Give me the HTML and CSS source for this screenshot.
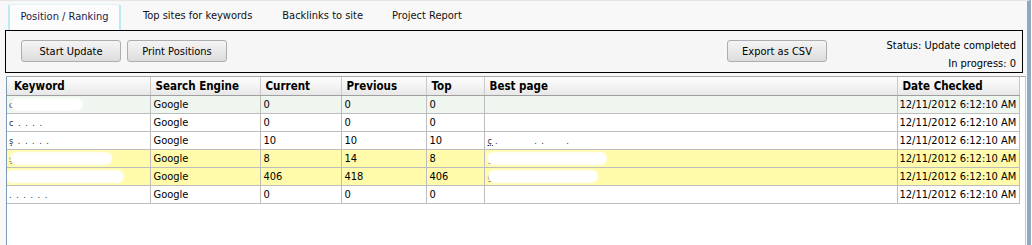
FILE: index.html
```html
<!DOCTYPE html>
<html lang="en">
<head>
  <meta charset="UTF-8" />
  <title>Position / Ranking</title>
  <link rel="stylesheet" href="styles.css">
</head>
<body>
  <div class="frame">
    <div class="tabs">
      <div class="tab active">Position / Ranking</div>
      <div class="tab">Top sites for keywords</div>
      <div class="tab">Backlinks to site</div>
      <div class="tab">Project Report</div>
    </div>

    <div class="toolbar">
      <button class="btn btn-start">Start Update</button>
      <button class="btn btn-print">Print Positions</button>
      <button class="btn btn-export">Export as CSV</button>
      <div class="status">
        <div>Status: Update completed</div>
        <div>In progress: 0</div>
      </div>
    </div>

    <div class="grid-wrap">
      <table class="grid">
        <colgroup>
          <col class="c-kw"><col class="c-se"><col class="c-cur"><col class="c-prev"><col class="c-top"><col class="c-best"><col class="c-date">
        </colgroup>
        <thead>
          <tr>
            <th>Keyword</th>
            <th>Search Engine</th>
            <th>Current</th>
            <th>Previous</th>
            <th>Top</th>
            <th>Best page</th>
            <th>Date Checked</th>
          </tr>
        </thead>
        <tbody>
          <tr class="row-sel">
            <td><span class="hid">c</span><span class="blot" style="left:5px;width:70px"></span></td>
            <td>Google</td><td>0</td><td>0</td><td>0</td><td></td>
            <td>12/11/2012 6:12:10 AM</td>
          </tr>
          <tr>
            <td><span class="hid">c . . . .</span></td>
            <td>Google</td><td>0</td><td>0</td><td>0</td><td></td>
            <td>12/11/2012 6:12:10 AM</td>
          </tr>
          <tr>
            <td><span class="hid">ş . . . . .</span></td>
            <td>Google</td><td>10</td><td>10</td><td>10</td>
            <td><span class="hid link">ç</span><span class="hid dots">.&nbsp;&nbsp;&nbsp;&nbsp;&nbsp;&nbsp;&nbsp;&nbsp;&nbsp;&nbsp;.&nbsp;.&nbsp;&nbsp;&nbsp;&nbsp;&nbsp;&nbsp;.</span></td>
            <td>12/11/2012 6:12:10 AM</td>
          </tr>
          <tr class="row-hl">
            <td><span class="hid">ş . . . . . .</span><span class="blot" style="left:4px;width:100px"></span></td>
            <td>Google</td><td>8</td><td>14</td><td>8</td>
            <td><span class="hid">g.... .</span><span class="blot" style="left:3px;width:118px"></span></td>
            <td>12/11/2012 6:12:10 AM</td>
          </tr>
          <tr class="row-hl">
            <td><span class="blot" style="left:0;width:116px"></span></td>
            <td>Google</td><td>406</td><td>418</td><td>406</td>
            <td><span class="hid">g abcd.../.....php</span><span class="blot" style="left:4px;width:108px"></span></td>
            <td>12/11/2012 6:12:10 AM</td>
          </tr>
          <tr>
            <td><span class="hid">. . . . . .</span></td>
            <td>Google</td><td>0</td><td>0</td><td>0</td><td></td>
            <td>12/11/2012 6:12:10 AM</td>
          </tr>
        </tbody>
      </table>
    </div>
  </div>
</body>
</html>
```

FILE: styles.css
```css
body {
  margin: 0;
  font-family: Tahoma, "DejaVu Sans Condensed", "DejaVu Sans", sans-serif;
  font-size: 11px;
  color: #000;
  background: #fff;
  overflow: hidden;
}

.frame {
  height: 245px;
  background: #f8f8f8;
  border-top: 1px solid #e6e6e6;
  border-right: 4px solid #8ea9c4;
  margin-right: 1px;
  box-sizing: border-box;
}

.tabs {
  display: flex;
  height: 29px;
  padding-left: 8px;
  padding-top: 3px;
  box-sizing: border-box;
}

.tab {
  padding: 5px 0 0 0;
  height: 26px;
  box-sizing: border-box;
  color: #111;
}

.tab.active {
  background: #fcfcfc;
  border-left: 2px solid #bfe9f3;
  border-right: 2px solid #bfe9f3;
  border-top: 1px solid #e2f4f8;
  border-radius: 3px 3px 0 0;
  width: 113px;
  text-align: center;
  color: #1a1a50;
}

.tab:nth-child(2) { margin-left: 22px; }
.tab:nth-child(3) { margin-left: 30px; }
.tab:nth-child(4) { margin-left: 29px; }

.toolbar {
  display: flex;
  align-items: flex-start;
  margin: 0 4px 0 5px;
  height: 43px;
  border: 1px solid #000;
  background: #f6f6f6;
  padding: 9px 6px 0 15px;
  box-sizing: border-box;
}

.btn {
  font-family: inherit;
  font-size: 11px;
  height: 22px;
  padding: 0;
  border: 1px solid #adadad;
  border-radius: 3px;
  background: linear-gradient(#f4f4f4, #e9e9e9 50%, #dcdcdc);
  color: #000;
}

.btn-start { width: 100px; }
.btn-print { width: 100px; margin-left: 6px; }
.btn-export { width: 100px; margin-left: 500px; }

.status {
  margin-left: auto;
  margin-top: -3px;
  text-align: right;
  line-height: 18px;
}

.grid-wrap {
  margin: 3px 0 0 6px;
  height: 170px;
  background: #fff;
  border-left: 1px solid #7d9bb5;
  border-right: 1px solid #c8c8c8;
  width: 1020px;
  box-sizing: border-box;
  border-top: 1px solid #a6a6a6;
}

.grid {
  border-collapse: collapse;
  width: 1012px;
  table-layout: fixed;
}

.c-kw { width: 143px; }
.c-se { width: 110px; }
.c-cur { width: 81px; }
.c-prev { width: 85px; }
.c-top { width: 58px; }
.c-best { width: 413px; }
.c-date { width: 122px; }

.grid th {
  height: 18px;
  padding: 0 0 0 5px;
  text-align: left;
  font-weight: bold;
  font-size: 11.5px;
  color: #000;
  background: linear-gradient(#fdfdfd, #f1f1f1 60%, #e7e7e7);
  border-right: 1px solid #c9c9c9;
  border-bottom: 1px solid #9f9f9f;
  box-sizing: border-box;
}

.grid th:first-child { padding-left: 7px; }

.grid td {
  height: 18px;
  padding: 0 0 0 3px;
  border-right: 1px solid #bdbdbd;
  border-bottom: 1px solid #bdbdbd;
  white-space: nowrap;
  overflow: hidden;
  position: relative;
  box-sizing: border-box;
}

.grid td:first-child { padding-left: 2px; }
.grid td:last-child { padding-left: 2px; border-right: 1px solid #bdbdbd; }

.row-sel td { background: #eff6ef; }
.row-hl td { background: #fffbaa; }

.hid {
  color: #2a2a40;
  font-size: 9px;
  letter-spacing: 1px;
}

.link { text-decoration: underline; }
.dots { margin-left: 2px; }

.blot {
  position: absolute;
  top: 3px;
  height: 11px;
  border-radius: 6px;
  background: #fff;
  box-shadow: 0 0 2px 1px #fff;
}
```
